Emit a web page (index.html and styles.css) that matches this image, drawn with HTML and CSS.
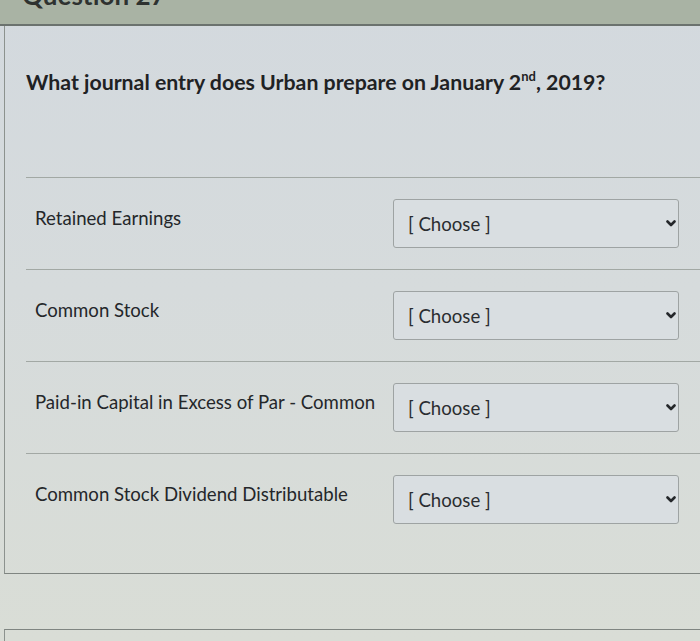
FILE: index.html
```html
<!DOCTYPE html>
<html lang="en">
<head>
<meta charset="utf-8">
<title>Question 27</title>
<link rel="stylesheet" href="styles.css">
</head>
<body>
<div class="header"><h2 class="qtitle">Question 27</h2></div>
<div class="panel">
  <p class="question">What journal entry does Urban prepare on January 2<sup>nd</sup>, 2019?</p>
  <div class="rows">
    <div class="row">
      <div class="label">Retained Earnings</div>
      <div class="select"><span>[ Choose ]</span><svg class="chev" width="10" height="7" viewBox="0 0 10 7"><path d="M1.5 1.5 L5 5 L8.5 1.5" fill="none" stroke="#24272a" stroke-width="2.6" stroke-linecap="round" stroke-linejoin="round"/></svg></div>
    </div>
    <div class="row">
      <div class="label">Common Stock</div>
      <div class="select"><span>[ Choose ]</span><svg class="chev" width="10" height="7" viewBox="0 0 10 7"><path d="M1.5 1.5 L5 5 L8.5 1.5" fill="none" stroke="#24272a" stroke-width="2.6" stroke-linecap="round" stroke-linejoin="round"/></svg></div>
    </div>
    <div class="row">
      <div class="label">Paid-in Capital in Excess of Par - Common</div>
      <div class="select"><span>[ Choose ]</span><svg class="chev" width="10" height="7" viewBox="0 0 10 7"><path d="M1.5 1.5 L5 5 L8.5 1.5" fill="none" stroke="#24272a" stroke-width="2.6" stroke-linecap="round" stroke-linejoin="round"/></svg></div>
    </div>
    <div class="row">
      <div class="label">Common Stock Dividend Distributable</div>
      <div class="select"><span>[ Choose ]</span><svg class="chev" width="10" height="7" viewBox="0 0 10 7"><path d="M1.5 1.5 L5 5 L8.5 1.5" fill="none" stroke="#24272a" stroke-width="2.6" stroke-linecap="round" stroke-linejoin="round"/></svg></div>
    </div>
  </div>
</div>
<div class="next"></div>
</body>
</html>
```
FILE: styles.css
```css
html, body {
  margin: 0;
  padding: 0;
}
body {
  width: 700px;
  height: 641px;
  overflow: hidden;
  font-family: Lato, "Liberation Sans", sans-serif;
  color: #26292b;
  background: linear-gradient(180deg, #d3d9de 0%, #d6dbdc 45%, #d9ddd6 100%);
}
.header {
  height: 24px;
  background: #a9b3a4;
  border-bottom: 2px solid #6b726e;
  overflow: hidden;
}
.qtitle {
  margin: -20px 0 0 0;
  padding-left: 22px;
  font-size: 26px;
  line-height: 30px;
  font-weight: 700;
  color: #2e3230;
}
.panel {
  margin-left: 4px;
  height: 548px;
  border-left: 1px solid #8c928e;
  border-bottom: 1px solid #7f8581;
  box-sizing: border-box;
}
.question {
  margin: 0;
  padding: 43px 0 0 21px;
  font-size: 21.3px;
  line-height: 26px;
  font-weight: 700;
  color: #1f2224;
  height: 64px;
}
.question sup {
  font-size: 13px;
  line-height: 0;
  vertical-align: 9px;
}
.rows {
  margin-left: 21px;
  margin-top: 44px;
  border-top: 1px solid #a2a8a4;
}
.row {
  display: flex;
  align-items: center;
  padding: 21px 20px 21px 9px;
  border-bottom: 1px solid #a2a8a4;
}
.row:last-child {
  border-bottom: none;
}
.label {
  width: 358px;
  font-size: 18.6px;
  line-height: 22px;
  margin-bottom: 12px;
  color: #24272a;
}
.select {
  width: 286px;
  height: 49px;
  box-sizing: border-box;
  border: 1px solid #9ea3a3;
  border-radius: 3px;
  background: #d9dee1;
  display: flex;
  align-items: center;
  justify-content: space-between;
  padding: 0 2px 0 14px;
  font-size: 18.6px;
  color: #2a2d30;
}
.chev {
  display: block;
}
.next {
  margin: 55px 0 0 4px;
  height: 30px;
  border-left: 1px solid #8c928e;
  border-top: 1px solid #7f8581;
}
```
